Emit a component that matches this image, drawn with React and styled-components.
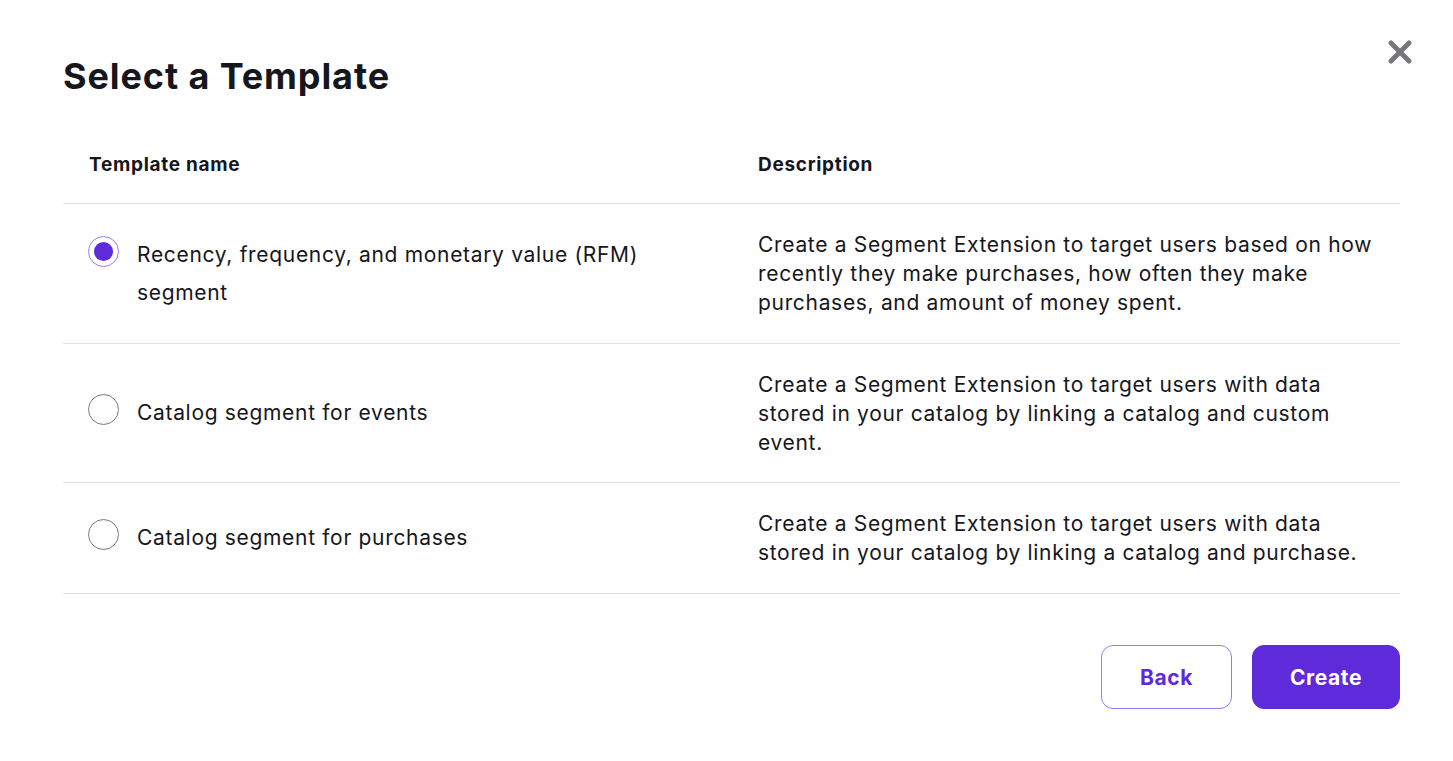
import React, { useState } from "react";
import styled, { createGlobalStyle } from "styled-components";

const Global = createGlobalStyle`
  html, body { margin: 0; padding: 0; background: #fff; }
  body { font-family: Inter, "Liberation Sans", sans-serif; color: #16161d; }
  * { box-sizing: border-box; }
`;

const Modal = styled.div`
  position: relative;
  width: 1453px;
  height: 761px;
  padding: 52px 53px 0 63px;
`;

const Close = styled.button`
  position: absolute;
  top: 38px;
  right: 39px;
  width: 28px;
  height: 28px;
  border: 0;
  background: none;
  padding: 0;
  cursor: pointer;
`;

const Title = styled.h1`
  margin: 0;
  font-size: 36px;
  font-weight: 700;
  line-height: 48px;
  letter-spacing: 0.9px;
`;

const Table = styled.div`
  margin-top: 53px;
  width: 1337px;
`;

const Row = styled.div`
  display: grid;
  grid-template-columns: 695px 1fr;
  align-items: center;
  border-bottom: 1px solid #e3e3e6;
  padding: ${(p) => p.$pad};
`;

const HeadCell = styled.div`
  font-size: 19px;
  font-weight: 700;
  line-height: 24px;
  letter-spacing: 0.7px;
  padding-left: ${(p) => (p.$first ? "26px" : "0")};
`;

const NameCell = styled.label`
  display: flex;
  align-items: flex-start;
  gap: 18px;
  padding-left: 25px;
  padding-right: 60px;
  font-size: 21px;
  line-height: 38px;
  letter-spacing: 0.68px;
  cursor: pointer;
`;

const Radio = styled.span`
  flex: none;
  width: 31px;
  height: 31px;
  border-radius: 50%;
  border: 1px solid ${(p) => (p.$on ? "#9b7cf4" : "#7a7a80")};
  display: flex;
  align-items: center;
  justify-content: center;
  &::after {
    content: "";
    width: 19px;
    height: 19px;
    border-radius: 50%;
    background: #5f2ad9;
    display: ${(p) => (p.$on ? "block" : "none")};
  }
`;

const Desc = styled.div`
  font-size: 21px;
  line-height: 29px;
  letter-spacing: 0.68px;
  padding-right: 10px;
`;

const Footer = styled.div`
  display: flex;
  justify-content: flex-end;
  gap: 20px;
  margin-top: 51.5px;
  width: 1337px;
`;

const Button = styled.button`
  height: 64px;
  border-radius: 12px;
  font-family: inherit;
  font-size: 21px;
  font-weight: 700;
  letter-spacing: 0.6px;
  cursor: pointer;
  width: ${(p) => p.$w}px;
  border: 1px solid ${(p) => (p.$primary ? "#5f2ad9" : "#9b7cf4")};
  background: ${(p) => (p.$primary ? "#5f2ad9" : "#fff")};
  color: ${(p) => (p.$primary ? "#fff" : "#5f2ad9")};
`;

const rows = [
  {
    name: "Recency, frequency, and monetary value (RFM) segment",
    desc: "Create a Segment Extension to target users based on how recently they make purchases, how often they make purchases, and amount of money spent.",
  },
  {
    name: "Catalog segment for events",
    desc: "Create a Segment Extension to target users with data stored in your catalog by linking a catalog and custom event.",
  },
  {
    name: "Catalog segment for purchases",
    desc: "Create a Segment Extension to target users with data stored in your catalog by linking a catalog and purchase.",
  },
];

export default function App() {
  const [sel, setSel] = useState(0);
  return (
    <>
      <Global />
      <Modal>
        <Close aria-label="Close">
          <svg width="28" height="28" viewBox="0 0 28 28">
            <path d="M5 5 L23 23 M23 5 L5 23" stroke="#77777c" strokeWidth="5" strokeLinecap="round" />
          </svg>
        </Close>
        <Title>Select a Template</Title>
        <Table>
          <Row $pad="0 0 26px">
            <HeadCell $first>Template name</HeadCell>
            <HeadCell>Description</HeadCell>
          </Row>
          {rows.map((r, i) => (
            <Row key={i} $pad="26px 0 25.5px">
              <NameCell onClick={() => setSel(i)}>
                <Radio $on={sel === i} />
                <span>{r.name}</span>
              </NameCell>
              <Desc>{r.desc}</Desc>
            </Row>
          ))}
        </Table>
        <Footer>
          <Button $w={131}>Back</Button>
          <Button $w={148} $primary>Create</Button>
        </Footer>
      </Modal>
    </>
  );
}
